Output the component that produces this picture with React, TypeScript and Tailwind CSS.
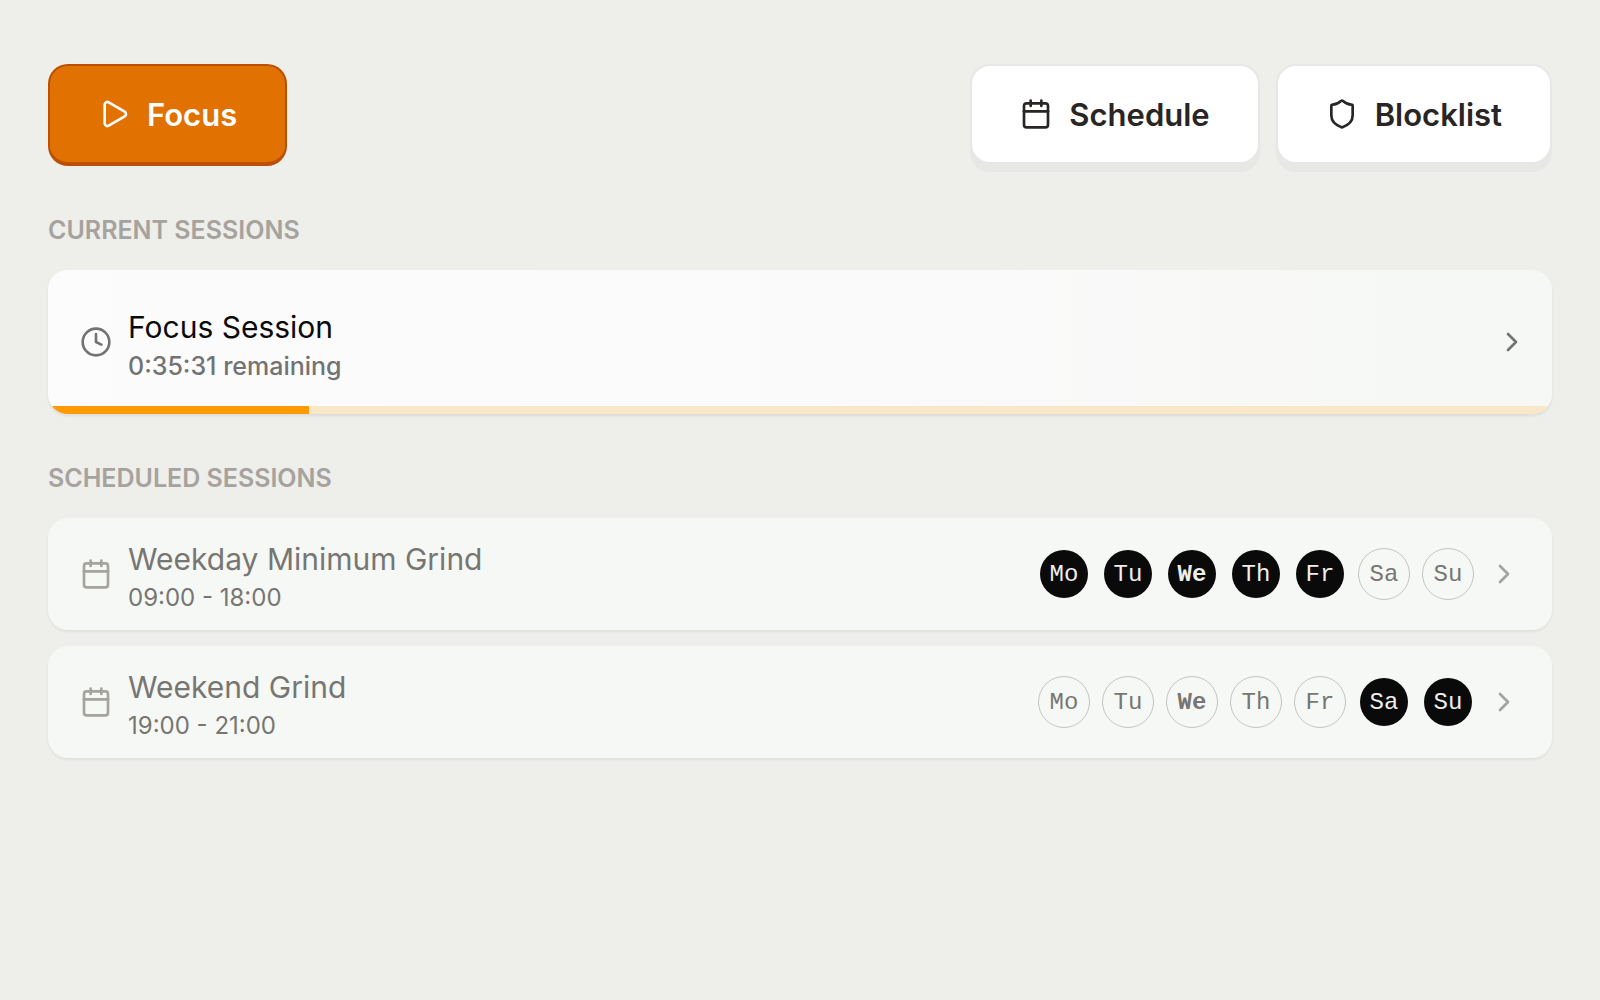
import { Calendar, ChevronRight, Clock, Play, Shield } from "lucide-react";

const days = ["Mo", "Tu", "We", "Th", "Fr", "Sa", "Su"];
const today = "We";

const scheduled = [
  { name: "Weekday Minimum Grind", time: "09:00 - 18:00", active: ["Mo", "Tu", "We", "Th", "Fr"] },
  { name: "Weekend Grind", time: "19:00 - 21:00", active: ["Sa", "Su"] }
];

export default function App() {
  return <main className="min-h-screen bg-[#eeeeea] px-12 pt-16 pb-16 font-['Inter',sans-serif]">
    <header className="flex items-start justify-between">
      <button type="button" className="flex items-center gap-[17px] rounded-[20px] border-2 border-b-4 border-[#bd4f00] bg-[#e17100] px-12 py-6 text-[31px] font-semibold text-white">
        <Play size={32} strokeWidth={2} aria-hidden="true" /><span className="pt-0.5 leading-[46px]">Focus</span>
      </button>
      <div className="flex gap-4">
        <ToolButton icon={Calendar} label="Schedule" />
        <ToolButton icon={Shield} label="Blocklist" />
      </div>
    </header>

    <section className="mt-12">
      <SectionTitle>Current sessions</SectionTitle>
      <a href="#focus" className="relative mt-6 block overflow-hidden rounded-[20px] bg-linear-to-r from-[#fcfcfc] via-[#fafafa] to-[#f6f8f5] shadow-[0_2px_3px_rgba(0,0,0,0.08)]">
        <div className="flex items-center gap-4 py-8 pr-6 pl-8">
          <Clock size={32} strokeWidth={2} className="text-[#737373]" aria-hidden="true" />
          <div className="grow pt-1">
            <p className="pb-0.5 text-3xl leading-[42px] text-[#0a0a0a]">Focus Session</p>
            <p className="text-[25px] leading-8 font-medium text-[#737373]">0:35:31 remaining</p>
          </div>
          <ChevronRight size={32} strokeWidth={2} className="text-[#737373]" aria-hidden="true" />
        </div>
        <div className="absolute inset-x-0 bottom-0 h-2 bg-[#fae6c8]"><div className="h-full bg-[#fe9a04]" style={{ width: "17.35%" }} /></div>
      </a>
    </section>

    <section className="mt-12">
      <SectionTitle>Scheduled sessions</SectionTitle>
      <div className="mt-6 grid gap-4">
        {scheduled.map((item) => <a key={item.name} href="#schedule" className="flex items-center gap-4 rounded-[20px] bg-[#f6f8f5] px-8 py-4 shadow-[0_2px_3px_rgba(0,0,0,0.06)]">
          <Calendar size={32} strokeWidth={2} className="text-[#a6a29e]" aria-hidden="true" />
          <div className="grow pt-1 text-[#777672]">
            <p className="pb-0.5 text-3xl leading-[42px]">{item.name}</p>
            <p className="text-2xl leading-8">{item.time}</p>
          </div>
          <ul className="flex gap-4">
            {days.map((day) => <Day key={day} day={day} active={item.active.includes(day)} />)}
          </ul>
          <ChevronRight size={32} strokeWidth={2} className="text-[#a3a3a1]" aria-hidden="true" />
        </a>)}
      </div>
    </section>
  </main>;
}

function SectionTitle({ children }: { children: string }) {
  return <h2 className="text-[25px] leading-8 font-semibold text-[#a6a29e] uppercase">{children}</h2>;
}

function ToolButton({ icon: Icon, label }: { icon: typeof Calendar; label: string }) {
  return <button type="button" className="flex items-center gap-[17px] rounded-[20px] border-2 border-[#e7e7e5] bg-white px-12 py-6 text-[31px] font-semibold text-[#292524] shadow-[0_8px_0_#e7e7e5]">
    <Icon size={32} strokeWidth={2} aria-hidden="true" /><span className="pt-0.5 leading-[46px]">{label}</span>
  </button>;
}

function Day({ day, active }: { day: string; active: boolean }) {
  const tone = active ? "bg-[#0a0a0a] text-[#eeeeea]" : "text-[#777672] outline outline-offset-1 outline-[#c4c5c2]";
  const weight = day === today ? "font-bold" : "font-normal";
  return <li className={`flex size-12 items-center justify-center rounded-full pt-0.5 font-['Liberation_Mono',monospace] text-2xl ${tone} ${weight}`}>{day}</li>;
}
